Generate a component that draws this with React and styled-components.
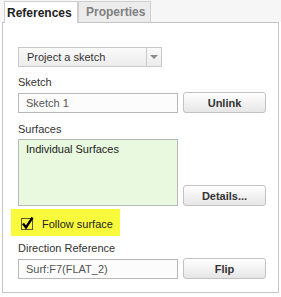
import React from 'react';
import styled, { createGlobalStyle } from 'styled-components';

const Global = createGlobalStyle`
  body {
    margin: 0;
    background: #fff;
    font-family: "Liberation Sans", Arial, sans-serif;
  }
`;

const Wrap = styled.div`
  width: 281px;
  height: 297px;
  background: #fff;
`;

const TabBar = styled.div`
  display: flex;
  align-items: flex-end;
  height: 22px;
  padding-left: 4px;
  background: #f6f6f6;
`;

const Tab = styled.div`
  box-sizing: border-box;
  height: 21px;
  width: ${p => p.w}px;
  padding-left: ${p => p.pad}px;
  display: flex;
  align-items: center;
  font-size: 12px;
  font-weight: bold;
  border: 1px solid #cfcfcf;
  border-bottom: none;
  margin-bottom: ${p => (p.active ? '-1px' : '0')};
  height: ${p => (p.active ? 22 : 21)}px;
  background: ${p => (p.active ? '#fff' : '#ececec')};
  color: ${p => (p.active ? '#222' : '#808080')};
  position: relative;
  z-index: ${p => (p.active ? 1 : 0)};
`;

const Panel = styled.div`
  box-sizing: border-box;
  margin: 0 2px 0 2px;
  height: 271px;
  border: 1px solid #c4c4c4;
  padding: 24px 0 0 15px;
  display: flex;
  flex-direction: column;
`;

const Select = styled.div`
  box-sizing: border-box;
  width: 144px;
  height: 20px;
  display: flex;
  border: 1px solid #c8c8c8;
  background: linear-gradient(#fafafa, #ececec);
  font-size: 11px;
  color: #333;
`;

const SelectText = styled.div`
  flex: 1;
  display: flex;
  align-items: center;
  padding-left: 8px;
`;

const Arrow = styled.div`
  width: 14px;
  border-left: 1px solid #c8c8c8;
  display: flex;
  align-items: center;
  justify-content: center;

  &::after {
    content: '';
    border-left: 4px solid transparent;
    border-right: 4px solid transparent;
    border-top: 4px solid #8a8a8a;
  }
`;

const Label = styled.div`
  font-size: 11px;
  line-height: 14px;
  color: #333;
  margin-top: ${p => p.top}px;
  margin-bottom: 3px;
`;

const Row = styled.div`
  display: flex;
  align-items: flex-end;
  gap: 5px;
`;

const Field = styled.div`
  box-sizing: border-box;
  width: 160px;
  height: ${p => p.h || 20}px;
  border: 1px solid #b8b8b8;
  background: ${p => p.bg || '#fcfcfc'};
  padding: ${p => (p.multi ? '3px 0 0 7px' : '0 0 0 7px')};
  display: flex;
  align-items: ${p => (p.multi ? 'flex-start' : 'center')};
  font-size: 11px;
  color: ${p => (p.multi ? '#222' : '#555')};
`;

const Button = styled.div`
  box-sizing: border-box;
  width: 83px;
  height: 21px;
  border: 1px solid #c2c2c2;
  border-radius: 3px;
  background: linear-gradient(#ffffff, #e6e6e6);
  display: flex;
  align-items: center;
  justify-content: center;
  font-size: 11px;
  font-weight: bold;
  color: #333;
`;

const Highlight = styled.div`
  box-sizing: border-box;
  width: 109px;
  height: 27px;
  margin: 3px 0 0 -7px;
  padding: 2px 0 0 9px;
  background: #fafa3c;
  display: flex;
  align-items: center;
  gap: 8px;
  font-size: 11px;
  color: #222;
`;

const Check = () => (
  <svg width="14" height="14" viewBox="0 0 14 14">
    <rect x="1.5" y="1.5" width="11" height="11" fill="none" stroke="#5a5a2a" strokeWidth="1" />
    <path d="M3 6.5 L6 10.5 L12.5 0.5" fill="none" stroke="#000" strokeWidth="2.4" />
  </svg>
);

export default function App() {
  return (
    <Wrap>
      <Global />
      <TabBar>
        <Tab active w={74} pad={2}>References</Tab>
        <Tab w={73} pad={7}>Properties</Tab>
      </TabBar>
      <Panel>
        <Select>
          <SelectText>Project a sketch</SelectText>
          <Arrow />
        </Select>

        <Label top={8}>Sketch</Label>
        <Row>
          <Field>Sketch 1</Field>
          <Button>Unlink</Button>
        </Row>

        <Label top={9}>Surfaces</Label>
        <Row>
          <Field multi h={67} bg="#e8f9df">Individual Surfaces</Field>
          <Button>Details...</Button>
        </Row>

        <Highlight>
          <Check />
          <span>Follow surface</span>
        </Highlight>

        <Label top={5}>Direction Reference</Label>
        <Row>
          <Field>Surf:F7(FLAT_2)</Field>
          <Button>Flip</Button>
        </Row>
      </Panel>
    </Wrap>
  );
}
